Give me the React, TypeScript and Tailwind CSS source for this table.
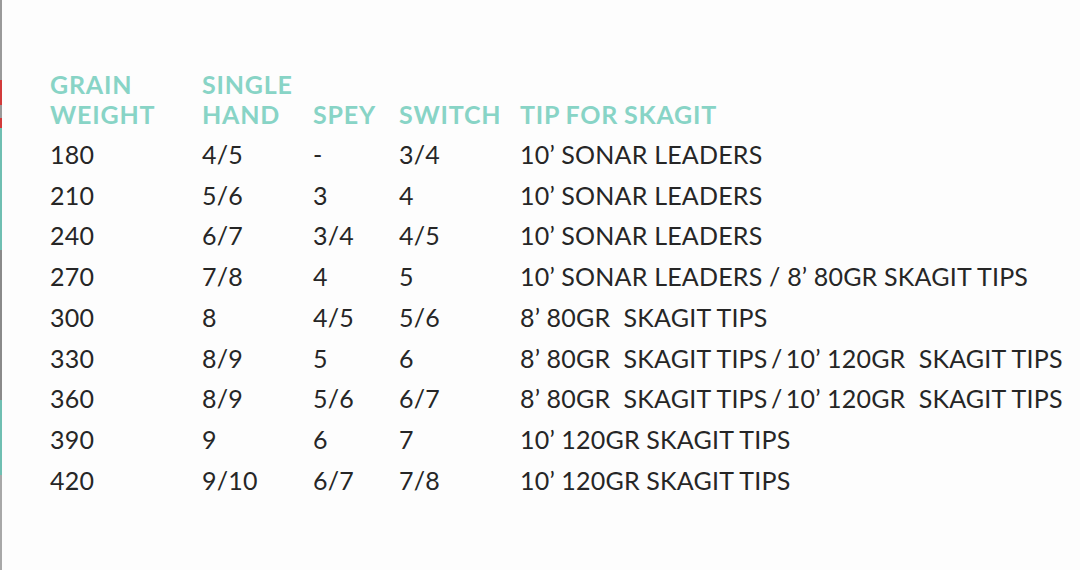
const rows = [
  ["180", "4/5", "-", "3/4", "10’ SONAR LEADERS"],
  ["210", "5/6", "3", "4", "10’ SONAR LEADERS"],
  ["240", "6/7", "3/4", "4/5", "10’ SONAR LEADERS"],
  ["270", "7/8", "4", "5", "10’ SONAR LEADERS / 8’ 80GR SKAGIT TIPS"],
  ["300", "8", "4/5", "5/6", "8’ 80GR  SKAGIT TIPS"],
  ["330", "8/9", "5", "6", "8’ 80GR  SKAGIT TIPS\u2009/\u200910’ 120GR  SKAGIT TIPS"],
  ["360", "8/9", "5/6", "6/7", "8’ 80GR  SKAGIT TIPS\u2009/\u200910’ 120GR  SKAGIT TIPS"],
  ["390", "9", "6", "7", "10’ 120GR SKAGIT TIPS"],
  ["420", "9/10", "6/7", "7/8", "10’ 120GR SKAGIT TIPS"],
]

const edge = [
  { h: "h-[80px]", c: "bg-[#9a9a9a]" },
  { h: "h-[25px]", c: "bg-[#d23a3a]" },
  { h: "h-[13px]", c: "bg-[#9a9a9a]" },
  { h: "h-[10px]", c: "bg-[#d23a3a]" },
  { h: "h-[122px]", c: "bg-[#6fbfb2]" },
  { h: "h-[150px]", c: "bg-[#8a8a8a]" },
  { h: "h-[75px]", c: "bg-[#6fbfb2]" },
  { h: "h-[95px]", c: "bg-[#a8a8a8]" },
]

export default function App() {
  return (
    <div
      className="flex w-[1080px] h-[570px] bg-[#fdfdfd] overflow-hidden"
      style={{ fontFamily: "Lato, 'Open Sans', sans-serif" }}
    >
      <div className="flex flex-col w-[2px] shrink-0">
        {edge.map((e, i) => (
          <div key={i} className={`${e.h} ${e.c}`} />
        ))}
      </div>

      <div className="pl-[48px] pt-[69px]">
        <div className="grid grid-cols-[152px_111px_86px_121px_auto] items-end text-[25px] leading-[30px] font-bold text-[#88d4c6] tracking-[0.8px]">
          <div>
            GRAIN
            <br />
            WEIGHT
          </div>
          <div>
            SINGLE
            <br />
            HAND
          </div>
          <div>SPEY</div>
          <div>SWITCH</div>
          <div className="[word-spacing:-1px]">TIP FOR SKAGIT</div>
        </div>

        <div className="mt-[5px] grid grid-cols-[152px_111px_86px_121px_auto] text-[25px] leading-[40.7px] text-[#262626] tracking-[0.2px]">
          {rows.map((r, i) =>
            r.map((cell, j) => (
              <div key={`${i}-${j}`} className="whitespace-pre">
                {cell}
              </div>
            ))
          )}
        </div>
      </div>
    </div>
  )
}
